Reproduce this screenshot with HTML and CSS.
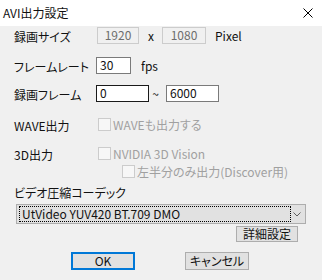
FILE: index.html
```html
<!DOCTYPE html>
<html lang="ja">
<head>
  <meta charset="UTF-8" />
  <title>AVI出力設定</title>
  <link rel="stylesheet" href="styles.css">
</head>
<body>
  <div class="titlebar">
    <span class="title">AVI出力設定</span>
    <svg class="close" width="10" height="10" viewBox="0 0 10 10">
      <path d="M0.5 0.5 L9.5 9.5 M9.5 0.5 L0.5 9.5" stroke="#000" stroke-width="1" fill="none"/>
    </svg>
  </div>

  <div class="dialog">
    <div class="row row-size">
      <span class="label">録画サイズ</span>
      <span class="field disabled w41">1920</span>
      <span class="sep-x">x</span>
      <span class="field disabled w44">1080</span>
      <span class="unit-pixel">Pixel</span>
    </div>

    <div class="row row-rate">
      <span class="label">フレームレート</span>
      <span class="field w35">30</span>
      <span class="unit-fps">fps</span>
    </div>

    <div class="row row-frame">
      <span class="label">録画フレーム</span>
      <span class="field focus w53">0</span>
      <span class="sep-tilde">~</span>
      <span class="field w53">6000</span>
    </div>

    <div class="row row-wave">
      <span class="label">WAVE出力</span>
      <span class="check"><span class="box"></span>WAVEも出力する</span>
    </div>

    <div class="row row-3d">
      <span class="label">3D出力</span>
      <span class="check"><span class="box"></span>NVIDIA 3D Vision</span>
    </div>

    <div class="row row-half">
      <span class="check"><span class="box"></span>左半分のみ出力(Discover用)</span>
    </div>

    <div class="codec-label">ビデオ圧縮コーデック</div>

    <div class="combo">
      <span class="combo-text">UtVideo YUV420 BT.709 DMO</span>
      <svg class="chevron" width="8" height="5" viewBox="0 0 8 5">
        <path d="M0.5 0.5 L4 4 L7.5 0.5" stroke="#606060" stroke-width="1" fill="none"/>
      </svg>
    </div>

    <div class="detail-row">
      <button class="btn btn-detail">詳細設定</button>
    </div>

    <div class="buttons">
      <button class="btn btn-ok">OK</button>
      <button class="btn btn-cancel">キャンセル</button>
    </div>
  </div>
</body>
</html>
```

FILE: styles.css
```css
body {
  margin: 0;
  width: 322px;
  height: 280px;
  font-family: "Noto Sans CJK JP", "Liberation Sans", sans-serif;
  font-size: 12px;
  font-feature-settings: "palt";
  color: #111;
  background: #f0f0f0;
  overflow: hidden;
}

.titlebar {
  height: 26px;
  background: #fff;
  display: flex;
  align-items: center;
  justify-content: space-between;
  padding: 0 9px 0 3px;
}

.title {
  font-size: 12px;
  line-height: 14px;
  margin-top: -1px;
}

.close {
  display: block;
  margin-top: -1px;
}

.dialog {
  padding-left: 14px;
  display: flex;
  flex-direction: column;
}

.row {
  display: flex;
  align-items: center;
  height: 17px;
}

.label {
  width: 82px;
  flex: none;
  white-space: nowrap;
  line-height: 14px;
  padding-top: 2px;
}

.field {
  box-sizing: border-box;
  height: 17px;
  border: 1px solid #7a7a7a;
  background: #fff;
  padding-left: 3px;
  line-height: 14px;
  font-size: 12px;
}

.field.disabled {
  border-color: #cccccc;
  background: #f0f0f0;
  color: #6d6d6d;
  text-align: center;
  padding-left: 0;
}

.field.focus {
  border-color: #1a1a1a;
}

.w35 { width: 35px; }
.w41 { width: 42px; margin-left: 1px; }
.w44 { width: 44px; }
.w53 { width: 53px; }

.sep-x {
  margin: 0 9px 0 9px;
  width: 5px;
}

.unit-pixel { margin-left: 9px; }
.unit-fps { margin-left: 10px; }

.sep-tilde {
  width: 17px;
  padding-right: 4px;
  box-sizing: border-box;
  text-align: center;
}

.row-size { margin-top: 1px; }
.row-rate { margin-top: 13px; }
.row-frame { margin-top: 11px; }

.row-wave { margin-top: 15px; height: 15px; }
.row-3d { margin-top: 14px; height: 15px; }
.row-half { margin-top: 3px; height: 15px; padding-left: 106px; }

.check {
  display: flex;
  align-items: center;
  color: #a0a0a0;
  line-height: 14px;
  margin-left: 2px;
}

.check .box {
  box-sizing: border-box;
  width: 13px;
  height: 13px;
  border: 1px solid #cccccc;
  background: #f7f7f7;
  margin-right: 2px;
}

.codec-label {
  margin-top: 7px;
  line-height: 14px;
  height: 14px;
}

.combo {
  box-sizing: border-box;
  margin: 4px 0 0 2px;
  width: 290px;
  height: 20px;
  border: 1px solid #adadad;
  background: #e1e1e1;
  display: flex;
  align-items: center;
  justify-content: space-between;
  padding: 0 3px 0 2px;
}

.combo-text {
  box-sizing: border-box;
  width: 272px;
  height: 16px;
  border: 1px dotted #000;
  padding-left: 2px;
  line-height: 14px;
}

.chevron {
  display: block;
  margin-right: 1px;
}

.detail-row {
  display: flex;
  justify-content: flex-end;
  width: 284px;
  margin-top: 2px;
}

.btn {
  box-sizing: border-box;
  height: 16px;
  border: 1px solid #adadad;
  background: #e1e1e1;
  font-family: "Noto Sans CJK JP", "Liberation Sans", sans-serif;
  font-size: 12px;
  font-feature-settings: "palt";
  line-height: 14px;
  padding: 0;
  color: #111;
}

.btn-detail { width: 62px; }

.buttons {
  display: flex;
  margin-top: 10px;
  padding-left: 57px;
  gap: 50px;
}

.btn-ok,
.btn-cancel {
  width: 64px;
  height: 18px;
}

.btn-ok {
  border: 2px solid #0078d7;
}
```
